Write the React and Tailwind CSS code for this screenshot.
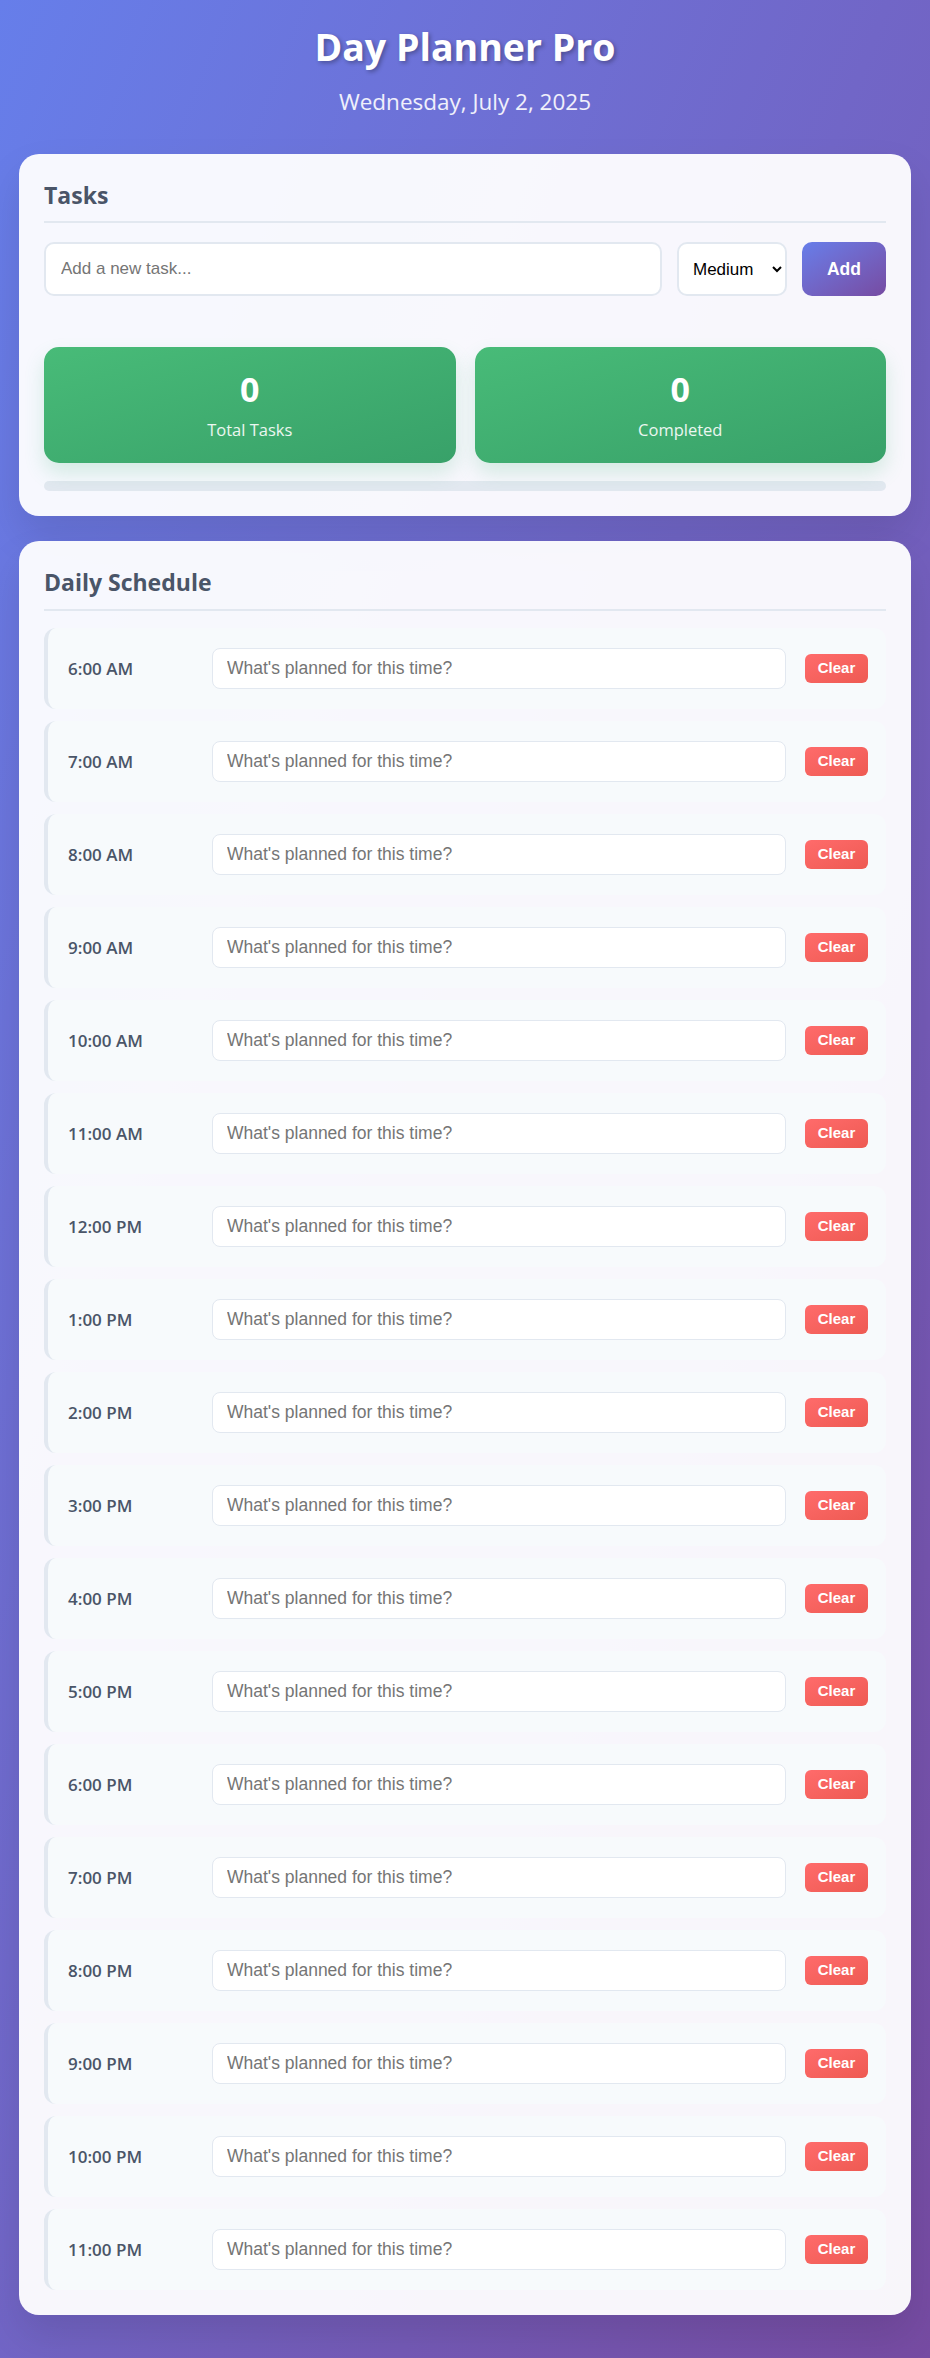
import React, { useState } from 'react';

const HOURS = [
  '6:00 AM', '7:00 AM', '8:00 AM', '9:00 AM', '10:00 AM', '11:00 AM',
  '12:00 PM', '1:00 PM', '2:00 PM', '3:00 PM', '4:00 PM', '5:00 PM',
  '6:00 PM', '7:00 PM', '8:00 PM', '9:00 PM', '10:00 PM', '11:00 PM',
];

function TimeSlot({ time, value, onChange, onClear }) {
  return (
    <div className="flex items-center h-[81px] mb-[12px] last:mb-0 pl-[20px] pr-[18px] bg-[#f7fafc] border-l-4 border-[#e2e8f0] rounded-xl">
      <div className="w-[129px] shrink-0 text-[17px] font-semibold text-[#4a5568]">{time}</div>
      <input
        type="text"
        value={value}
        onChange={(e) => onChange(e.target.value)}
        placeholder="What's planned for this time?"
        className="ml-[15px] flex-1 h-[41px] px-[14px] bg-white border border-[#e2e8f0] rounded-lg text-[17.5px] font-['Liberation_Sans',Arial,sans-serif] placeholder:text-[#757575] outline-none"
      />
      <button
        onClick={onClear}
        className="ml-[19px] w-[63px] h-[29px] rounded-md bg-gradient-to-br from-[#ff6b6b] to-[#ee5a52] text-white text-[15px] font-bold font-['Liberation_Sans',Arial,sans-serif]"
      >
        Clear
      </button>
    </div>
  );
}

export default function App() {
  const [task, setTask] = useState('');
  const [slots, setSlots] = useState(() => HOURS.map(() => ''));

  const setSlot = (i, v) => setSlots((s) => s.map((x, j) => (j === i ? v : x)));

  return (
    <div className="min-h-screen bg-gradient-to-br from-[#667eea] to-[#764ba2] px-[19px] pt-[23px] pb-[45px] font-['Open_Sans',sans-serif]">
      {/* Header */}
      <header className="text-center text-white">
        <h1 className="text-[37.5px] leading-[48px] font-bold [text-shadow:2px_2px_4px_rgba(0,0,0,0.3)]">Day Planner Pro</h1>
        <p className="mt-[16px] text-[22.5px] leading-[30px] text-white/90">Wednesday, July 2, 2025</p>
      </header>

      {/* Tasks */}
      <section className="mt-[37px] bg-white/95 rounded-[20px] p-[25px] shadow-[0_20px_40px_rgba(0,0,0,0.1)]">
        <h2 className="text-[23px] leading-[32px] font-bold text-[#4a5568] pb-[10px] border-b-2 border-[#e2e8f0] mb-[19px]">Tasks</h2>
        <div className="flex gap-[15px]">
          <input
            type="text"
            value={task}
            onChange={(e) => setTask(e.target.value)}
            placeholder="Add a new task..."
            className="flex-1 h-[54px] px-[15px] bg-white border-2 border-[#e2e8f0] rounded-[10px] text-[17px] font-['Liberation_Sans',Arial,sans-serif] placeholder:text-[#757575] outline-none"
          />
          <select
            defaultValue="medium"
            className="w-[110px] h-[54px] px-[10px] bg-white border-2 border-[#e2e8f0] rounded-[10px] text-[17px] text-black font-['Liberation_Sans',Arial,sans-serif]"
          >
            <option value="low">Low</option>
            <option value="medium">Medium</option>
            <option value="high">High</option>
          </select>
          <button className="w-[84px] h-[54px] rounded-[10px] bg-gradient-to-br from-[#667eea] to-[#764ba2] text-white text-[17.5px] font-bold font-['Liberation_Sans',Arial,sans-serif]">
            Add
          </button>
        </div>

        <div className="mt-[51px] grid grid-cols-2 gap-[19px]">
          {[['0', 'Total Tasks'], ['0', 'Completed']].map(([n, label]) => (
            <div
              key={label}
              className="h-[116px] flex flex-col items-center justify-center rounded-[15px] bg-gradient-to-br from-[#48bb78] to-[#38a169] text-white shadow-[0_10px_20px_rgba(72,187,120,0.2)]"
            >
              <div className="text-[34px] leading-[40px] font-bold">{n}</div>
              <div className="mt-[10px] text-[16.5px] leading-[22px] text-white/90">{label}</div>
            </div>
          ))}
        </div>

        <div className="mt-[18px] h-[10px] rounded-full bg-[#e2e8f0]" />
      </section>

      {/* Schedule */}
      <section className="mt-[25px] bg-white/95 rounded-[20px] p-[25px] shadow-[0_20px_40px_rgba(0,0,0,0.1)]">
        <h2 className="text-[23px] leading-[32px] font-bold text-[#4a5568] pb-[11px] border-b-2 border-[#e2e8f0] mb-[17px]">Daily Schedule</h2>
        <div>
          {HOURS.map((h, i) => (
            <TimeSlot
              key={h}
              time={h}
              value={slots[i]}
              onChange={(v) => setSlot(i, v)}
              onClear={() => setSlot(i, '')}
            />
          ))}
        </div>
      </section>
    </div>
  );
}
